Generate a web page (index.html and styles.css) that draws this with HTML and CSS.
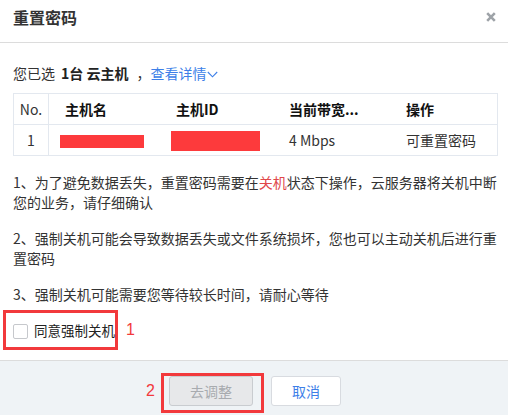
FILE: index.html
```html
<!DOCTYPE html>
<html lang="zh-CN">
<head>
<meta charset="utf-8">
<title>重置密码</title>
<link rel="stylesheet" href="styles.css">
</head>
<body>
<div class="dialog">
  <div class="dlg-head">
    <h1 class="dlg-title">重置密码</h1>
    <span class="dlg-close" aria-label="关闭">
      <svg width="10" height="10" viewBox="0 0 10 10"><path d="M1.2 1.2 L8.8 8.8 M8.8 1.2 L1.2 8.8" stroke="#9ea3a8" stroke-width="2.6" stroke-linecap="butt"/></svg>
    </span>
  </div>
  <div class="dlg-body">
    <div class="selected">
      <span>您已选</span>
      <b class="sel-count">1台 云主机</b>
      <span class="sel-comma">，</span>
      <a class="sel-link">查看详情<svg class="chev" width="11" height="7" viewBox="0 0 11 7"><path d="M0.8 1 L5.5 5.8 L10.2 1" fill="none" stroke="#3d7fe8" stroke-width="1.1"/></svg></a>
    </div>
    <div class="tbl">
      <div class="tr th">
        <div class="td c-no">No.</div>
        <div class="td">主机名</div>
        <div class="td">主机ID</div>
        <div class="td">当前带宽...</div>
        <div class="td">操作</div>
      </div>
      <div class="tr">
        <div class="td c-no">1</div>
        <div class="td"><span class="redact r1"></span></div>
        <div class="td"><span class="redact r2"></span></div>
        <div class="td">4 Mbps</div>
        <div class="td">可重置密码</div>
      </div>
    </div>
    <p class="note">1、为了避免数据丢失，重置密码需要在<span class="warn">关机</span>状态下操作，云服务器将关机中断您的业务，请仔细确认</p>
    <p class="note">2、强制关机可能会导致数据丢失或文件系统损坏，您也可以主动关机后进行重置密码</p>
    <p class="note">3、强制关机可能需要您等待较长时间，请耐心等待</p>
    <div class="agree-row">
      <label class="agree mark">
        <span class="cb"></span>
        <span class="agree-text">同意强制关机</span>
      </label>
      <span class="mark-num num1">1</span>
    </div>
  </div>
  <div class="dlg-foot">
    <span class="mark-num num2">2</span>
    <div class="mark btn-mark">
      <button class="btn btn-disabled" disabled>去调整</button>
    </div>
    <button class="btn btn-cancel">取消</button>
  </div>
</div>
</body>
</html>
```
FILE: styles.css
```css
html, body {
  margin: 0;
  padding: 0;
  background: #fff;
}
body {
  font-family: "Noto Sans CJK SC", "Noto Sans", sans-serif;
  color: #333;
  font-size: 14px;
}
.dialog {
  width: 508px;
  height: 415px;
  display: flex;
  flex-direction: column;
  background: #fff;
}
.dlg-head {
  height: 42px;
  border-bottom: 1px solid #dcdcdc;
  display: flex;
  align-items: flex-start;
  justify-content: space-between;
  padding: 0 12px 0 13px;
}
.dlg-title {
  margin: 7px 0 0 0;
  font-size: 16px;
  line-height: 20px;
  font-weight: bold;
  color: #333;
}
.dlg-close {
  margin-top: 12px;
  width: 10px;
  height: 10px;
  display: block;
}
.dlg-close svg { display: block; }
.dlg-body {
  flex: 1;
  padding: 20px 10px 0 13px;
}
.selected {
  display: flex;
  align-items: center;
  line-height: 20px;
  height: 20px;
  color: #333;
}
.sel-count {
  margin-left: 6px;
  font-weight: bold;
  color: #222;
}
.sel-comma {
  margin-left: 8px;
}
.sel-link {
  margin-left: 0;
  color: #3d7fe8;
  display: flex;
  align-items: center;
}
.chev { margin-left: 1px; margin-top: 2px; }
.tbl {
  margin-top: 10px;
  border: 1px solid #e3e8ef;
}
.tr {
  display: grid;
  grid-template-columns: 35px 111px 113px 117px 1fr;
  height: 30px;
  align-items: center;
}
.tr + .tr { border-top: 1px solid #e3e8ef; }
.th .td { font-weight: bold; color: #111; }
.td {
  padding-left: 16px;
  height: 30px;
  line-height: 30px;
  white-space: nowrap;
  overflow: hidden;
  display: flex;
  align-items: center;
}
.td.c-no {
  padding-left: 0;
  justify-content: center;
  border-right: 1px solid #e3e8ef;
  font-weight: normal;
  color: #333;
}
.redact {
  display: block;
  background: #fd3a3c;
  margin-left: -5px;
}
.r1 { width: 84px; height: 13px; margin-top: 2px; }
.r2 { width: 89px; height: 20px; margin-top: 1px; }
.note {
  margin: 16px 0 0 0;
  line-height: 20px;
  font-size: 14px;
  color: #333;
}
.warn { color: #e0474a; }
.agree-row {
  margin-top: 6px;
  margin-left: -10px;
  display: flex;
  align-items: center;
}
.mark {
  border: 3px solid #f2393c;
}
.agree {
  display: flex;
  align-items: center;
  padding: 7px 0 7px 7px;
  width: 102px;
  height: 20px;
}
.cb {
  width: 13px;
  height: 13px;
  border: 1px solid #c6c8cc;
  border-radius: 2px;
  background: #fff;
  margin-top: 2px;
  flex: none;
}
.agree-text {
  margin-left: 6px;
  line-height: 20px;
  font-size: 13.5px;
  white-space: nowrap;
  color: #222;
}
.mark-num {
  font-family: "Liberation Sans", Arial, sans-serif;
  color: #f2393c;
  font-size: 16px;
  line-height: 20px;
}
.num1 { margin-left: 8px; }
.dlg-foot {
  height: 55px;
  box-sizing: border-box;
  border-top: 1px solid #dcdcdc;
  background: #eff3f6;
  display: flex;
  align-items: flex-start;
  padding: 12px 0 0 146px;
}
.num2 {
  margin-top: 8px;
  width: 12px;
  margin-right: 3px;
}
.btn-mark {
  padding: 0 8px 4px 5px;
}
.btn {
  height: 30px;
  box-sizing: border-box;
  border-radius: 3px;
  font-family: "Noto Sans CJK SC", "Noto Sans", sans-serif;
  font-size: 14px;
  padding: 0;
  display: block;
}
.btn-disabled {
  width: 84px;
  background: #e7e8ea;
  border: 1px solid #c9ccd0;
  color: #a8abaf;
}
.btn-cancel {
  width: 70px;
  margin-left: 7px;
  margin-top: 3px;
  background: #fff;
  border: 1px solid #d8dbe0;
  color: #3d7fe8;
}
```
